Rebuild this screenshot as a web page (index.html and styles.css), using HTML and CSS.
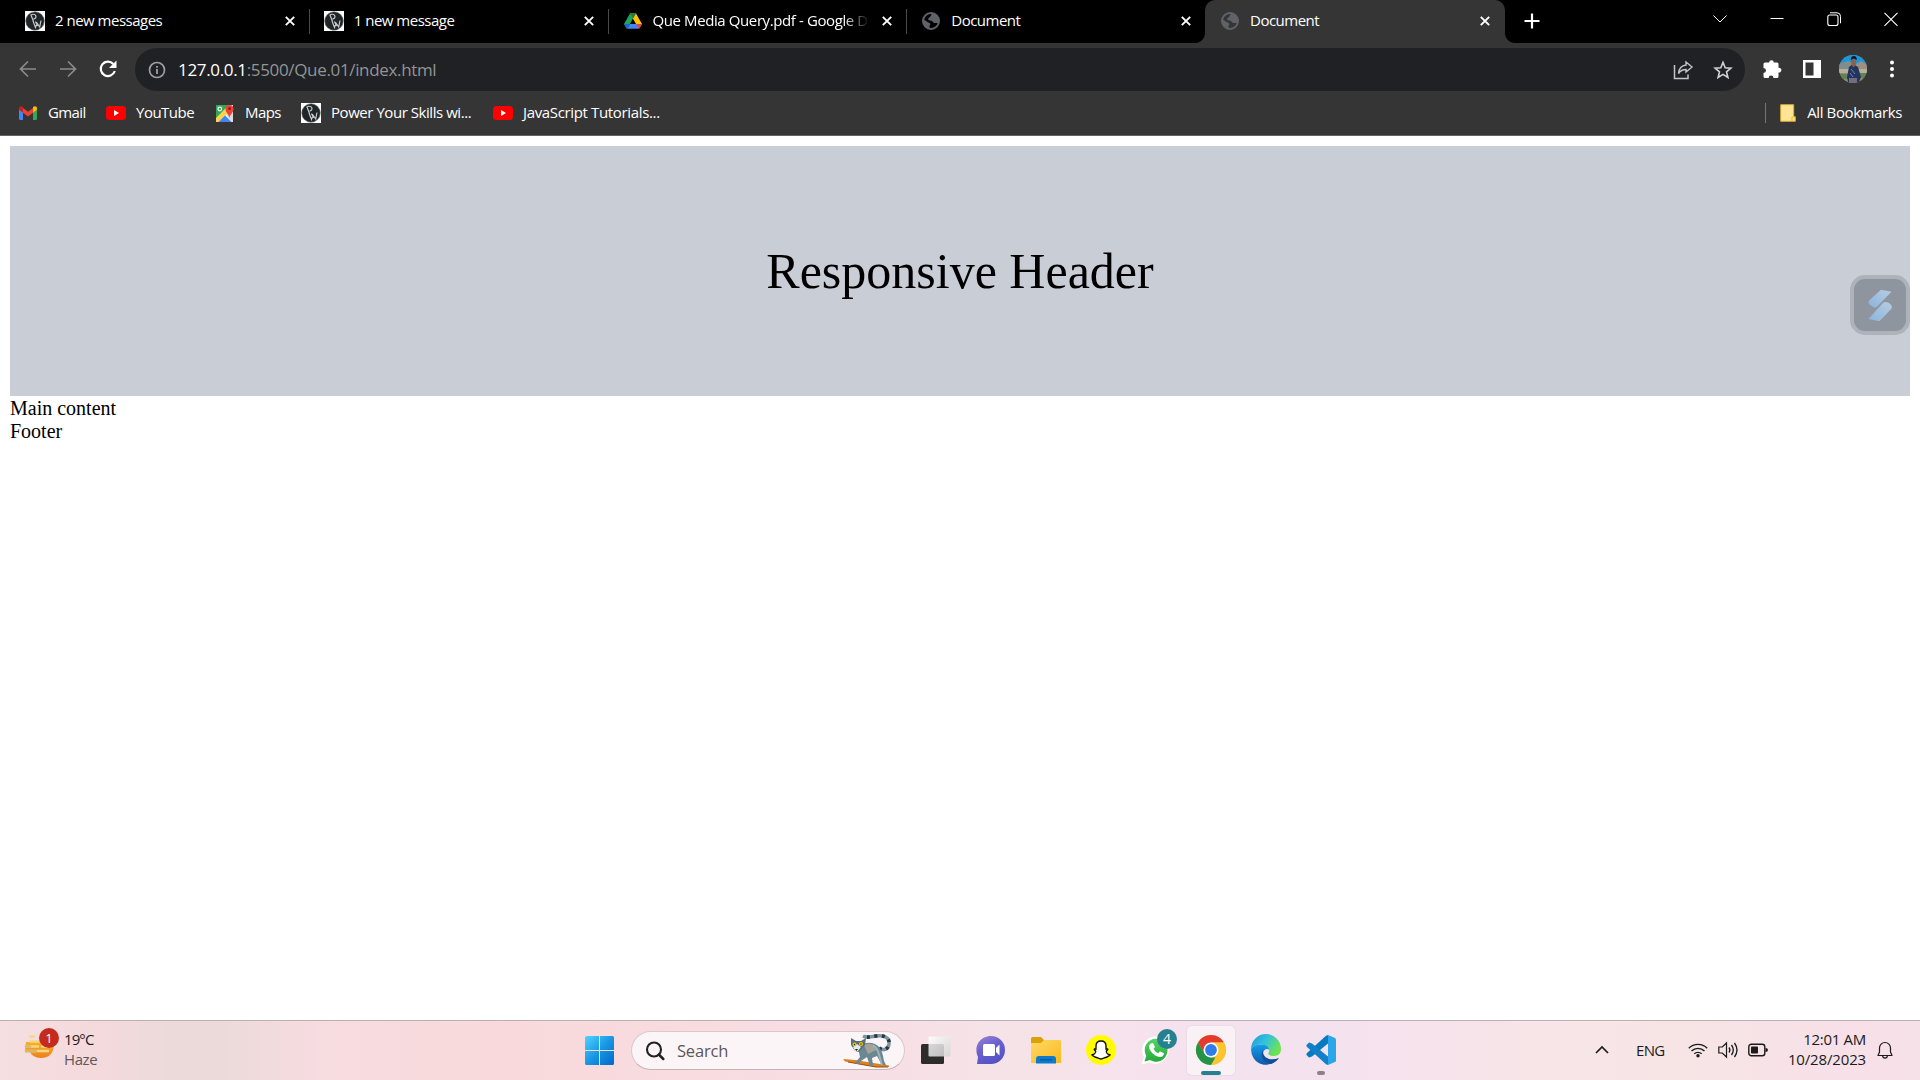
FILE: index.html
```html
<!DOCTYPE html>
<html lang="en">
<head>
<meta charset="utf-8">
<title>Document</title>
<link rel="stylesheet" href="styles.css">
</head>
<body>
<svg width="0" height="0" class="defs" aria-hidden="true">
  <defs>
    <symbol id="pw" viewBox="0 0 20 20"><rect width="20" height="20" fill="#fff"/><circle cx="10" cy="10" r="9.300" fill="#1f2427" stroke="#777c80" stroke-width=".6"/><path d="M5.800 3.500l2.700 7M6.500 3.500c5-1.500 6 4 2 4.500M8 10l2.500 6.500 1.500-4.500 2.700 4 1.300-6.500M10.500 10.500l2 4.500" fill="none" stroke="#c5c9cb" stroke-width="1.200"/></symbol>
    <symbol id="globe" viewBox="0 0 20 20"><circle cx="10" cy="10" r="8" fill="none" stroke="#5f6368" stroke-width="2"/><path d="M12.500 2c-3 1-2 3-3.500 4s-2.500 2-1.500 3 3.500 0 4.500 2 3.500.2 5 1.500l1-2.500c0-4-2-7-5.500-8zM2 9c3 0 4 2 5.500 2.500S10 13 9 14s-.5 2 0 3.500C5 18 2 14 2 9z" fill="#5f6368"/></symbol>
    <symbol id="close" viewBox="0 0 10 10"><path d="M.8.8l8.400 8.400M9.200.8L.8 9.200" stroke="#fff" stroke-width="1.900"/></symbol>
    <symbol id="yt" viewBox="0 0 20 14"><rect width="20" height="14" rx="3.500" fill="#f00"/><path d="M8 4l5 3-5 3z" fill="#fff"/></symbol>
    <linearGradient id="winlogo" x1="0" y1="0" x2="1" y2="1"><stop offset="0" stop-color="#50d4ff"/><stop offset=".5" stop-color="#1997e3"/><stop offset="1" stop-color="#0069ca"/></linearGradient>
    <linearGradient id="sun" x1="0" y1="0" x2="0" y2="1"><stop offset="0" stop-color="#f9c03a"/><stop offset="1" stop-color="#ee7f1b"/></linearGradient>
    <linearGradient id="chat" x1="0" y1="0" x2=".5" y2="1"><stop offset="0" stop-color="#9d84cd"/><stop offset=".5" stop-color="#6a61cf"/><stop offset="1" stop-color="#5553c4"/></linearGradient>
    <linearGradient id="folder" x1="0" y1="0" x2="1" y2="1"><stop offset="0" stop-color="#ffd968"/><stop offset="1" stop-color="#fbb91b"/></linearGradient>
    <linearGradient id="wa" x1="0" y1="0" x2="0" y2="1"><stop offset="0" stop-color="#56d466"/><stop offset="1" stop-color="#25a83a"/></linearGradient>
    <linearGradient id="edgetop" x1="0" y1="0" x2="1" y2=".5"><stop offset="0" stop-color="#1e96d8"/><stop offset=".5" stop-color="#32c2dd"/><stop offset="1" stop-color="#6ee352"/></linearGradient>
    <linearGradient id="edgelow" x1="0" y1="0" x2="0" y2="1"><stop offset="0" stop-color="#139ee6"/><stop offset="1" stop-color="#1058ac"/></linearGradient>
    <linearGradient id="pane" x1="0" y1="0" x2="1" y2="1"><stop offset="0" stop-color="#fff"/><stop offset="1" stop-color="#d2d2d2"/></linearGradient>
    <linearGradient id="blade" x1="0" y1="1" x2="1" y2="0"><stop offset="0" stop-color="#8bb4df"/><stop offset="1" stop-color="#b7cde0"/></linearGradient>
    <clipPath id="face"><circle cx="14" cy="14" r="14"/></clipPath>
  </defs>
</svg>

<div class="browser">
  <div class="tabstrip">
    <div class="tab"><svg class="fav"><use href="#pw"/></svg><span class="title t1">2 new messages</span><svg class="x"><use href="#close"/></svg></div>
    <div class="tab"><svg class="fav"><use href="#pw"/></svg><span class="title t2">1 new message</span><svg class="x"><use href="#close"/></svg></div>
    <div class="tab">
      <svg class="fav" viewBox="0 0 20 20"><path d="M7 2.500L1 13l3 5 6-10.500z" fill="#1ea362"/><path d="M7 2.500h6l6 10.500h-6z" fill="#ffc107"/><path d="M4.200 17.800L7 13h12l-3 4.800z" fill="#4285f4"/><path d="M7 2.500h6L10 7.700z" fill="#188038"/><path d="M13.200 13H19l-3 4.800z" fill="#ea4335"/><path d="M1 13h6l-2.800 4.800z" fill="#1967d2"/></svg>
      <span class="title t3">Que Media Query.pdf - Google D</span><svg class="x"><use href="#close"/></svg></div>
    <div class="tab last"><svg class="fav"><use href="#globe"/></svg><span class="title t4">Document</span><svg class="x"><use href="#close"/></svg></div>
    <div class="tab active"><svg class="fav"><use href="#globe"/></svg><span class="title t4">Document</span><svg class="x"><use href="#close"/></svg></div>
    <svg class="newtab" viewBox="0 0 16 16"><path d="M8 .5v15M.5 8h15" stroke="#fff" stroke-width="2.200"/></svg>
    <div class="winbtns">
      <svg viewBox="0 0 16 16"><path d="M1.500 4.500L8 11l6.500-6.500" fill="none" stroke="#fff"/></svg>
      <svg viewBox="0 0 16 16"><path d="M1.500 7.500h13" stroke="#fff"/></svg>
      <svg viewBox="0 0 16 16"><rect x="1.800" y="4" width="10.200" height="10.500" rx="2" fill="none" stroke="#fff" stroke-width="1.100"/><path d="M4 1.800h7q3.500 0 3.500 3.500v7" fill="none" stroke="#fff"/></svg>
      <svg viewBox="0 0 16 16"><path d="M1.500 1.800l13 13M14.500 1.800l-13 13" stroke="#fff" stroke-width="1.100"/></svg>
    </div>
  </div>

  <div class="toolbar">
    <div class="nav">
      <svg viewBox="0 0 20 20"><path d="M18 10H3M10 2.500L2.500 10l7.500 7.500" fill="none" stroke="#8b8b8b" stroke-width="1.700"/></svg>
      <svg viewBox="0 0 20 20"><path d="M2 10h15M10 2.500l7.500 7.500-7.500 7.500" fill="none" stroke="#8b8b8b" stroke-width="1.700"/></svg>
      <svg viewBox="0 0 20 20"><path d="M16.800 12A7.200 7.200 0 1 1 15.300 5" fill="none" stroke="#fff" stroke-width="2.200"/><path d="M18.500 1.500V9H11z" fill="#fff"/></svg>
    </div>
    <div class="omnibox">
      <svg class="info" viewBox="0 0 18 18"><circle cx="9" cy="9" r="7.500" fill="none" stroke="#9aa0a6" stroke-width="1.700"/><path d="M9 8v5M9 5v1.800" stroke="#9aa0a6" stroke-width="1.800"/></svg>
      <span class="url"><b>127.0.0.1</b>:5500/Que.01/index.html</span>
      <svg class="share" viewBox="0 0 20 20"><path d="M1.500 5v13.500h13.500v-4" fill="none" stroke="#c4c5c7" stroke-width="1.500"/><path d="M13 2l6 5-6 5V9.500c-3.500 0-5.500 1-7.500 4 .5-5 3-8 7.500-8.500z" fill="none" stroke="#c4c5c7" stroke-width="1.400"/></svg>
      <svg class="star" viewBox="0 0 20 20"><path d="M10 2.300l2.200 5.400 5.700.4-4.400 3.700 1.400 5.700-4.900-3.100-4.900 3.100 1.400-5.700L2.100 8.100l5.700-.4z" fill="none" stroke="#d0d1d3" stroke-width="1.600"/></svg>
    </div>
    <div class="tools">
      <svg viewBox="0 0 20 20"><path d="M1.500 5q0-1.500 1.500-1.500h4.200a2.300 2.300 0 1 1 4.600 0H15q1.500 0 1.500 1.500v3.700a2.400 2.400 0 1 1 0 4.700v4q0 1.500-1.500 1.500h-3.500a2.400 2.400 0 0 0-4.800 0H3q-1.500 0-1.500-1.500V14a2.400 2.400 0 0 0 0-5z" fill="#fff"/></svg>
      <svg viewBox="0 0 20 20"><path fill-rule="evenodd" d="M1 1h18v18H1zM3.500 3.500v13h8v-13z" fill="#fff"/></svg>
      <svg class="avatar" viewBox="0 0 28 28"><g clip-path="url(#face)"><path d="M0 0h28v28H0z" fill="#8c8f78"/><path d="M0 0h28v9l-5-2-7 3L9 6 0 9z" fill="#1b95dc"/><path d="M0 9l6-2 4 4v6H0z" fill="#7d8d90"/><path d="M17 9l5-3 6 4v7H18z" fill="#9c8f83"/><path d="M0 14h28v4H0z" fill="#b7b095"/><path d="M1 19h8v5H2zM21 18h7v5h-6z" fill="#5f8352"/><path d="M10 12l4-3 5 3 3 10-2 5H9l-1-5z" fill="#23345f"/><path d="M12 14l4 5M11 18l3 4" stroke="#6e83ad"/><path d="M12.300 4.500h4.500v5l-2.200 3-2.200-3z" fill="#8d604b"/><path d="M11.800 5q0-4 3-4t3 4l-3-1.500z" fill="#17161a"/><path d="M10 23h8v5h-8z" fill="#756e7a"/></g></svg>
      <svg viewBox="0 0 20 20"><circle cx="10" cy="3.500" r="2" fill="#fff"/><circle cx="10" cy="10" r="2" fill="#fff"/><circle cx="10" cy="16.500" r="2" fill="#fff"/></svg>
    </div>
  </div>

  <div class="bookmarks">
    <svg class="bi" viewBox="0 0 20 20"><path d="M1 5v10.500Q1 17 2.500 17H5V8z" fill="#4285f4"/><path d="M19 5v10.500q0 1.500-1.500 1.500H15V8z" fill="#34a853"/><path d="M5 5l5 3.800L15 5v4.800l-5 3.700-5-3.700z" fill="#ea4335"/><path d="M1 5.300C1 3 3.300 2.600 5 4v5.800L1 6.800z" fill="#c5221f"/><path d="M19 5.300C19 3 16.700 2.600 15 4v5.800l4-3z" fill="#fbbc04"/></svg><span class="b1">Gmail</span>
    <svg class="bi tube"><use href="#yt"/></svg><span class="b2">YouTube</span>
    <svg class="bi" viewBox="0 0 20 20"><path d="M1 2h17v17H1z" fill="#e8eaed"/><path d="M1 2h13L1 16z" fill="#34a853"/><path d="M1 15L14 2l4 3L3.500 19H1z" fill="#fbd34d"/><path d="M3.500 19L10 12.500l6.500 6.500z" fill="#4285f4"/><path d="M11 11l7-3v11h-1z" fill="#dadce0"/><circle cx="4.800" cy="6" r="1.800" fill="none" stroke="#fff" stroke-width="1.200"/><path d="M14.500 15c-.5-4-4-5-4-9a4 4 0 0 1 8 0c0 4-3.500 5-4 9z" fill="#ea4335"/><circle cx="14.500" cy="5.500" r="1.500" fill="#8e1b14"/></svg><span class="b3">Maps</span>
    <svg class="bi"><use href="#pw"/></svg><span class="b4">Power Your Skills wi...</span>
    <svg class="bi tube"><use href="#yt"/></svg><span class="b5">JavaScript Tutorials...</span>
    <div class="allmarks"><svg viewBox="0 0 16 18"><path d="M.7.7h13v12h1.600v4.600H.7z" fill="#ffe494" stroke="#d5ae36" stroke-width="1"/><path d="M12 17v-3.500l1.700-1" fill="none" stroke="#f4c430" stroke-width="1.400"/></svg><span class="b6">All Bookmarks</span></div>
  </div>
</div>

<div class="page">
  <div class="hero">Responsive Header</div>
  <div class="line">Main content</div>
  <div class="line">Footer</div>
  <div class="float"><svg viewBox="0 0 26 34"><path d="M13.500.5l11 2.200L9 18.500q-2 1.500-4-.2L1.500 16q-2-2 0-4.500z" fill="url(#blade)"/><path d="M.5 31l15.500-17q2-1.500 5 0 5 3 3.500 6L12 33.500z" fill="url(#blade)"/></svg></div>
</div>

<div class="taskbar">
  <div class="weather">
    <svg viewBox="0 0 34 38"><path d="M2 17h12q2-3 9-4 7-3 7 5 0 15-13 15-9 0-12-8H1z" fill="url(#sun)"/><path d="M6.500 11.500h3.500M6.500 16.500h9M2 21.500h12M2 26h22M18 21.500h6" stroke="#f5d77e" stroke-width="2.500" stroke-linecap="round"/><path d="M2 21.500h4M2 26.300h10" stroke="#d9b967" stroke-width="2.500" stroke-linecap="round"/></svg>
    <span class="badge red">1</span>
    <div class="temps"><span class="w1">19°C</span><span class="w2">Haze</span></div>
  </div>
  <div class="center">
    <svg class="start" viewBox="0 0 29 29"><path d="M0 1.500Q0 0 1.500 0H14v14H0zM15 0h12.500Q29 0 29 1.500V14H15zM0 15h14v14H1.500Q0 29 0 27.500zM15 15h14v12.500q0 1.500-1.500 1.500H15z" fill="url(#winlogo)"/></svg>
    <div class="search">
      <svg class="lens" viewBox="0 0 20 20"><circle cx="9" cy="8.500" r="7" fill="none" stroke="#222" stroke-width="2.100"/><path d="M13.800 13.500l4.500 4.500" stroke="#222" stroke-width="2.500" stroke-linecap="round"/></svg>
      <span class="st">Search</span>
      <svg class="lemur" viewBox="0 0 50 35">
        <path d="M1 26l12 1 34 5.500V34H33L3 28.500z" fill="#d98123"/><path d="M6 29l28 5h12" stroke="#9c4f16" fill="none"/>
        <path d="M37 15c4 3 9 2 10-4 1-7-6-9-13-8-5 1-9 2-13 0" fill="none" stroke="#7996a2" stroke-width="3.600"/>
        <path d="M37 15c4 3 9 2 10-4 1-7-6-9-13-8-5 1-9 2-13 0" fill="none" stroke="#2c363c" stroke-width="3.600" stroke-dasharray="3 4.500"/>
        <path d="M16 15c5-6 14-7 20-2 4 4 5 9 6 15l2 4h-4l-5-9-5 2 1 7-3 1-3-9-6 4-3 3-3-1 5-6z" fill="#6c8794"/>
        <path d="M22 12c6-3 11 0 12 5l-8 4z" fill="#a5a395"/><path d="M31 12c6 4 6 11 9 20" stroke="#9bb5be" stroke-width="2" fill="none"/>
        <path d="M9 5l5 3h5l5-3-1 7-6 7-4-1-4-6z" fill="#586e7b"/><path d="M11 14l4-3 4 3-3 4h-3z" fill="#e3e8e9"/><circle cx="12.500" cy="11.500" r="2" fill="#f5c315"/><circle cx="19" cy="11" r="2" fill="#f5c315"/><circle cx="12.500" cy="11.500" r=".7" fill="#222"/><circle cx="19" cy="11" r=".7" fill="#222"/><path d="M13 16h3l-1.500 2z" fill="#222"/></svg>
    </div>
    <div class="apps">
      <div class="app"><svg viewBox="0 0 30 30"><rect x="0" y="9" width="23" height="20" rx="1.500" fill="#2c2c2b"/><rect x="7.500" y="1.500" width="22" height="20" rx="1" fill="url(#pane)" opacity=".85"/></svg></div>
      <div class="app"><svg viewBox="0 0 30 30"><path d="M1 29l1-7C-3 10 5 1 15 1a14 14 0 1 1 0 28z" fill="url(#chat)"/><rect x="7" y="9" width="12" height="12" rx="1.500" fill="#fff"/><path d="M20 13l3.500-3.500v11L20 17z" fill="#fff"/></svg></div>
      <div class="app"><svg viewBox="0 0 30 30"><path d="M0 3.500Q0 2 1.500 2H10l3 3h16v6H0z" fill="#dda108"/><path d="M0 8h10l3-3h15.500Q30 5 30 6.500V28H0z" fill="url(#folder)"/><path d="M5 28.500V24q0-3 3-3h14q3 0 3 3v4.500z" fill="#0e7acb"/><path d="M9 24.800h12" stroke="#07549b" stroke-width="1.200"/></svg></div>
      <div class="app"><svg viewBox="0 0 30 30"><circle cx="15" cy="15" r="15" fill="#fffc00"/><path d="M15 6c3.500 0 5 2.500 5 5v3c1 0 1.800-.2 1.800.5 0 .9-1.500.9-1.500 2 0 1.500 2 3 3.700 3.300 0 1.500-2.800 1-3.300 2.500-1.800-.5-2.800 1.700-5.700 1.700s-3.900-2.200-5.700-1.700C8.800 20.800 6 21.300 6 19.800c1.700-.3 3.700-1.800 3.700-3.300 0-1.100-1.500-1.100-1.500-2 0-.7.800-.5 1.800-.5v-3c0-2.500 1.500-5 5-5z" fill="#fff" stroke="#111" stroke-width="1.400"/></svg></div>
      <div class="app"><svg viewBox="0 0 30 30"><path d="M.5 29.500L3 22C-2 11 5 1.500 15 1.500a13.800 13.800 0 0 1 0 27.500c-3 0-5-.8-6.500-1.500z" fill="#fff"/><path d="M3.500 26.500L5.300 21C1 12 7 3.700 15 3.700a11.500 11.500 0 1 1-6 21.300z" fill="url(#wa)"/><path d="M10 8.500l2-.5 2 4-1.500 2q1.700 3 4.700 4.200l1.700-1.900 4 2q0 3.700-4 3.700C13 21.500 7.500 15 8 11q.5-2 2-2.500z" fill="#fff"/></svg><span class="badge teal">4</span></div>
      <div class="app on"><svg viewBox="0 0 30 30"><circle cx="15" cy="15" r="15" fill="#f9c22b"/><path d="M2 7.500A15 15 0 0 1 28 7.500H15L8.500 18.700z" fill="#e33b2e"/><path d="M2 7.500L8.600 18.700 15 22.500h6.500L15 30A15 15 0 0 1 2 7.500z" fill="#219447"/><path d="M21.500 18.700L15 30A15 15 0 0 0 28 7.500H15z" fill="#fbc52d"/><circle cx="15" cy="15" r="7.500" fill="#fff"/><circle cx="15" cy="15" r="5.900" fill="#2f7de9"/></svg><i class="bar wide"></i></div>
      <div class="app"><svg viewBox="0 0 30 30"><path d="M0 14A15 15 0 0 1 30 14q0 7-7 7c-5 0-7-2-5-4C20 10 7 6 0 14z" fill="url(#edgetop)"/><path d="M0 14C4 8 18 8 18 15c-1-2-6-1-6 4 0 6 8 8 15 4-6 9-19 9-24.500 0Q0 19 0 14z" fill="url(#edgelow)"/><path d="M12 15c-4 6 1 13 8 14 3-1 6-3 8-6-7 3-17 1-16-8z" fill="#124f9b"/></svg></div>
      <div class="app"><svg viewBox="0 0 30 30"><path d="M22 0v8.500L6 21.500l-3 1L.5 20q-.5-1 .5-2L20 .8z" fill="#087abf"/><path d="M22 30v-8.500L6 8.500l-3-1L.5 10q-.5 1 .5 2l19 17.200z" fill="#1280c8"/><path d="M22 0l7 3q1 .5 1 1.500v21q0 1-1 1.500l-7 3z" fill="#2ba6eb"/></svg><i class="bar"></i></div>
    </div>
  </div>
  <div class="tray">
    <svg class="chev" viewBox="0 0 14 10"><path d="M1 8l6-6 6 6" fill="none" stroke="#1b1b1b" stroke-width="1.700"/></svg>
    <span class="lang">ENG</span>
    <svg class="wifi" viewBox="0 0 20 16"><path d="M.8 6.200a13 13 0 0 1 18.400 0M3.500 9a9.200 9.200 0 0 1 13 0M6.300 11.800a5.300 5.300 0 0 1 7.400 0" fill="none" stroke="#1b1b1b" stroke-width="1.300"/><circle cx="10" cy="13.800" r="1.700" fill="#1b1b1b"/></svg>
    <svg class="vol" viewBox="0 0 20 18"><path d="M.8 6h3.500L8.500 2v14l-4.200-4H.8z" fill="none" stroke="#1b1b1b" stroke-width="1.200"/><path d="M11 6.500q1.800 2.500 0 5M13.500 4q3.600 5 0 10M16.500 2q5 7 0 14" fill="none" stroke="#1b1b1b" stroke-width="1.300"/></svg>
    <svg class="bat" viewBox="0 0 20 14"><rect x=".8" y="1.300" width="16" height="11.400" rx="2.500" fill="none" stroke="#1b1b1b" stroke-width="1.400"/><rect x="3" y="3.500" width="7" height="7" rx=".8" fill="#1b1b1b"/><path d="M17.500 5q2.500 0 2.500 2t-2.500 2z" fill="#1b1b1b"/></svg>
    <div class="clock"><span class="c1">12:01 AM</span><span class="c2">10/28/2023</span></div>
    <svg class="bell" viewBox="0 0 16 18"><path d="M1 14.500l1.500-3.500V7a5.500 5.500 0 0 1 11 0v4l1.500 3.500z" fill="none" stroke="#1b1b1b" stroke-width="1.200" stroke-linejoin="round"/><path d="M5.500 15q.5 2.200 2.500 2.200t2.500-2.200" fill="none" stroke="#1b1b1b" stroke-width="1.200"/></svg>
  </div>
</div>
</body>
</html>
```
FILE: styles.css
```css
* { box-sizing: border-box; }
body { margin: 0; width: 1920px; height: 1080px; overflow: hidden; display: flex; flex-direction: column; background: #fff; font-family: "Open Sans", "Noto Sans", sans-serif; }
svg { display: block; flex: none; overflow: visible; }
.defs { position: absolute; }
span { white-space: nowrap; }

.browser { height: 136px; flex: none; background: #353535; border-bottom: 1px solid #636363; color: #fff; }

.tabstrip { height: 43px; display: flex; background: #000; padding-left: 10px; }
.tab { width: 298.750px; height: 43px; padding: 0 14px 1px 15px; display: flex; align-items: center; font-size: 15px; position: relative; flex: none; }
.tab::after { content: ""; position: absolute; right: -1px; top: 9px; width: 1px; height: 25px; background: #4a4a4a; }
.tab.last::after { display: none; }
.fav { width: 20px; height: 20px; margin-right: 10px; }
.title { flex: 1; min-width: 0; overflow: hidden; height: 24px; line-height: 22px; }
.x { width: 10px; height: 10px; margin-left: 15px; }
.t1, .t2 { letter-spacing: -.5px; }
.t3 { letter-spacing: -.4px; -webkit-mask-image: linear-gradient(90deg, #000 190px, transparent 216px); mask-image: linear-gradient(90deg, #000 190px, transparent 216px); }
.t4 { letter-spacing: -.5px; }
.tab.active { width: 300px; padding-right: 15px; background: #353535; border-radius: 10px 10px 0 0; }
.tab.active::after { right: -10px; top: 33px; width: 10px; height: 10px; background: radial-gradient(circle at 10px 0, #000 9.500px, #353535 10.500px); }
.tab.active::before { content: ""; position: absolute; left: -10px; bottom: 0; width: 10px; height: 10px; background: radial-gradient(circle at 0 0, #000 9.500px, #353535 10.500px); }
.newtab { width: 16px; height: 16px; margin: 13px 0 0 19px; }
.winbtns { margin: 11px 21px 0 auto; display: flex; gap: 41px; }
.winbtns svg { width: 16px; height: 16px; }

.toolbar { height: 48px; display: flex; align-items: flex-end; }
.nav { flex: none; width: 135px; height: 43px; padding: 0 0 2px 18px; display: flex; gap: 20px; align-items: center; }
.nav svg { width: 20px; height: 20px; }
.omnibox { flex: none; width: 1610px; height: 43px; border-radius: 22px; background: #202124; display: flex; align-items: center; padding: 0 12px 0 13px; }
.info { width: 18px; height: 18px; margin-right: 12px; }
.url { flex: 1; font-size: 17px; letter-spacing: -.34px; color: #929496; line-height: 24px; }
.url b { font-weight: 400; color: #fff; }
.share, .star { width: 20px; height: 20px; }
.share { margin-right: 20px; }
.tools { flex: none; height: 43px; padding: 0 0 2px 17px; display: flex; align-items: center; }
.tools svg { width: 20px; height: 20px; margin-right: 20px; }
.tools .avatar { width: 28px; height: 28px; margin: 0 15px 0 -3px; }
.tools svg:last-child { margin-right: 0; }

.bookmarks { height: 44px; display: flex; align-items: center; padding-left: 18px; font-size: 15px; line-height: 22px; }
.bookmarks span { padding-bottom: 2px; }
.bi { width: 20px; height: 20px; margin-right: 10px; }
.bi.tube { height: 14px; width: 20px; }
.b1 { width: 58px; letter-spacing: -.6px; }
.b2 { width: 79px; letter-spacing: -.5px; }
.b3 { width: 56px; letter-spacing: -.6px; }
.b4 { width: 162px; letter-spacing: -.45px; }
.b5 { letter-spacing: -.35px; }
.b6 { letter-spacing: -.4px; }
.allmarks { margin: 0 18px 0 auto; height: 20px; padding-left: 14px; border-left: 1px solid #747474; display: flex; align-items: center; }
.allmarks svg { width: 16px; height: 18px; margin-right: 11px; }

.page { height: 884px; flex: none; padding: 10px; position: relative; font-family: "Liberation Serif", serif; font-size: 20px; color: #000; }
.hero { height: 250px; background: #c9cdd5; display: flex; align-items: center; justify-content: center; font-size: 50px; }
.line { height: 23px; line-height: 24px; }
.float { position: absolute; right: 10px; top: 139px; width: 60px; height: 60px; border: 4px solid #adb2bb; border-radius: 15px; background: #8f959e; display: flex; align-items: center; justify-content: center; }
.float svg { width: 25px; height: 33px; }

.taskbar { height: 60px; flex: none; position: relative; border-top: 1px solid #bcaeb3; display: flex; background: linear-gradient(90deg, #f5dfe1 0, #f5dadd 90px, #ecdada 170px, #ecdada 220px, #f7dce0 320px, #f9d9dc 500px, #f8dce0 700px, #f6e0e6 900px, #f6e3e7 1000px, #f5e2ef 1200px, #f5e2ef 1350px, #f7e5e7 1550px, #f7e5e6 1700px, #f7e0e8 1850px, #f7e1e8 1920px); color: #1b1b1b; }
.weather { width: 585px; padding: 4px 0 0 24px; position: relative; display: flex; }
.weather > svg { width: 34px; height: 38px; }
.badge { position: absolute; width: 20px; height: 20px; border-radius: 50%; color: #fff; font-size: 13px; line-height: 20px; text-align: center; }
.red { left: 39px; top: 7px; background: #c42b1c; }
.teal { left: 25px; top: 3px; background: #287f8d; font-size: 14px; }
.temps { margin: 4px 0 0 6px; display: flex; flex-direction: column; font-size: 15px; line-height: 20px; }
.w1 { letter-spacing: -.9px; }
.w2 { letter-spacing: -.4px; color: #5f5759; }
.center { display: flex; width: 763px; align-items: center; }
.start { width: 29px; height: 29px; }
.search { width: 274px; height: 39px; margin-left: 17px; border: 1px solid #ddc7cc; border-bottom-color: #c9b0b5; border-radius: 20px; background: #fcf5f7; display: flex; align-items: center; padding: 0 12px 0 13px; }
.lens { width: 20px; height: 20px; margin-right: 12px; }
.st { flex: 1; font-size: 16.500px; letter-spacing: -.2px; color: #5d5759; }
.lemur { width: 50px; height: 35px; }
.apps { display: flex; gap: 7px; margin-left: 7px; }
.app { width: 48px; height: 49px; display: flex; justify-content: center; align-items: center; position: relative; border-radius: 5px; }
.app svg { width: 30px; height: 30px; margin-bottom: 1px; }
.app.on { background: #faf1f7; box-shadow: 0 0 0 1px #eadde5; }
.bar { position: absolute; bottom: 0; left: 20px; width: 8px; height: 4px; border-radius: 2px; background: #8b8187; }
.bar.wide { left: 14px; width: 20px; background: #26808f; }
.tray { flex: 1; display: flex; align-items: center; justify-content: flex-end; padding: 0 27px 1px 0; font-size: 15px; }
.chev { width: 14px; height: 10px; margin-right: 27px; }
.lang { letter-spacing: -.7px; width: 29px; margin-right: 23px; }
.wifi { width: 20px; height: 16px; margin-right: 10px; }
.vol { width: 20px; height: 18px; margin-right: 10px; }
.bat { width: 20px; height: 14px; margin-right: 20px; }
.clock { display: flex; flex-direction: column; align-items: flex-end; line-height: 20px; width: 78px; padding-bottom: 3px; }
.c1 { letter-spacing: -.3px; }
.c2 { letter-spacing: -.15px; }
.bell { width: 16px; height: 18px; margin-left: 11px; }
```
